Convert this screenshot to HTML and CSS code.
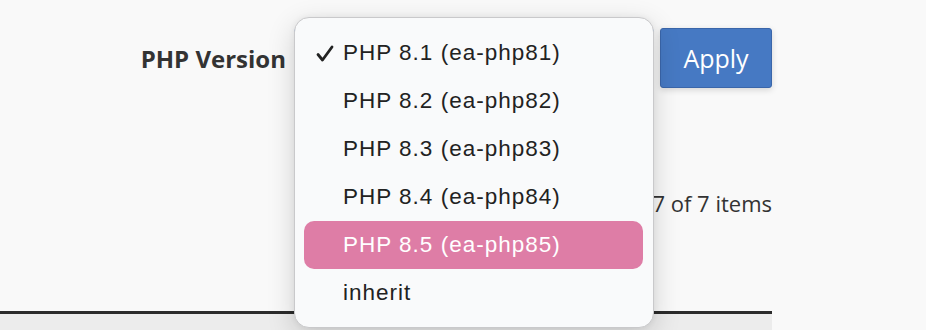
FILE: index.html
```html
<!DOCTYPE html>
<html lang="en">
<head>
    <meta charset="UTF-8">
    <meta name="viewport" content="width=device-width, initial-scale=1.0">
    <title>MultiPHP Manager</title>
    <link rel="stylesheet" href="styles.css">
</head>
<body>
    <div class="page">
        <div class="form-row">
            <label class="field-label">PHP Version</label>
            <div class="select-wrap">
                <div class="select-box"></div>
                <ul class="dropdown">
                    <li class="option checked">
                        <svg class="check" width="18" height="17" viewBox="0 0 18 17"><path d="M2 9.5 L6.5 15 L16 2" fill="none" stroke="#222" stroke-width="2.8" stroke-linecap="round" stroke-linejoin="round"/></svg>
                        PHP 8.1 (ea-php81)
                    </li>
                    <li class="option">PHP 8.2 (ea-php82)</li>
                    <li class="option">PHP 8.3 (ea-php83)</li>
                    <li class="option">PHP 8.4 (ea-php84)</li>
                    <li class="option active">PHP 8.5 (ea-php85)</li>
                    <li class="option">inherit</li>
                </ul>
            </div>
            <button class="btn-apply">Apply</button>
        </div>

        <div class="summary">7 of 7 items</div>

        <div class="table-head"></div>
    </div>
</body>
</html>
```

FILE: styles.css
```css
* {
    margin: 0;
    padding: 0;
    box-sizing: border-box;
}

body {
    background: #f9f9f9;
    font-family: 'Open Sans', sans-serif;
    color: #333;
    height: 330px;
    overflow: hidden;
}

.page {
    width: 772px;
    height: 330px;
    display: flex;
    flex-direction: column;
}

.form-row {
    display: flex;
    align-items: center;
    justify-content: flex-end;
    padding-top: 28px;
}

.field-label {
    font-size: 24px;
    font-weight: 700;
    color: #333;
    margin-right: 8px;
}

.select-wrap {
    position: relative;
    width: 360px;
    height: 60px;
    margin-right: 6px;
}

.select-box {
    height: 60px;
    border: 2px solid #5b8fd6;
    border-radius: 4px;
    background: #fff;
}

.dropdown {
    position: absolute;
    top: -11px;
    left: 0;
    width: 360px;
    list-style: none;
    padding: 11px 0 10px;
    background: #f9fafb;
    border: 1px solid #c9c9cb;
    border-radius: 15px;
    box-shadow: 0 8px 28px rgba(0, 0, 0, 0.16), 0 0 6px rgba(0, 0, 0, 0.06);
    z-index: 10;
}

.option {
    position: relative;
    height: 48px;
    line-height: 48px;
    margin: 0 10px 0 9px;
    padding-left: 39px;
    border-radius: 10px;
    font-family: 'Liberation Sans', Arial, sans-serif;
    font-size: 22.5px;
    letter-spacing: 1px;
    color: #222;
}

.option.active {
    background: #de7da6;
    color: #fff;
}

.check {
    position: absolute;
    left: 12px;
    top: 16px;
}

.btn-apply {
    width: 112px;
    height: 60px;
    background: #4679c3;
    border: 1px solid #3a66aa;
    border-radius: 3px;
    color: #fff;
    font-family: 'Open Sans', sans-serif;
    font-size: 25px;
    box-shadow: 0 2px 6px rgba(0, 0, 0, 0.15);
}

.summary {
    margin-top: 100px;
    text-align: right;
    font-size: 22px;
    line-height: 30px;
    color: #333;
}

.table-head {
    margin-top: 93px;
    flex: 1;
    border-top: 3px solid #2b2b2b;
    background: #ececec;
}
```
